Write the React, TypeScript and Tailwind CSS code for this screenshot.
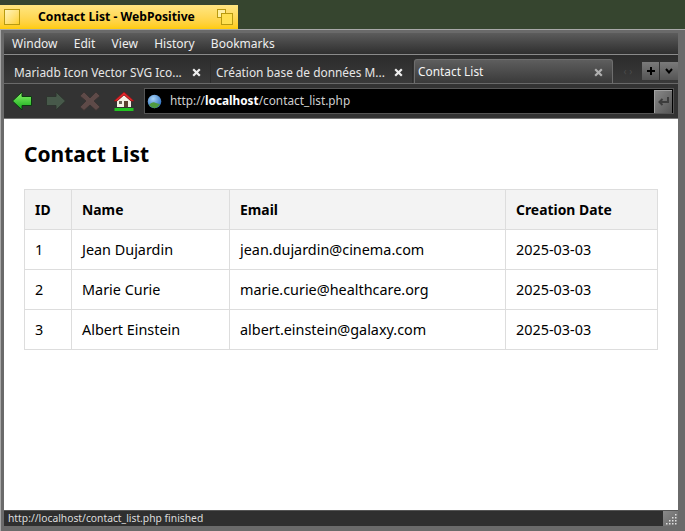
const font = "font-['Noto_Sans',sans-serif]";

const contacts = [
  { id: 1, name: 'Jean Dujardin', email: 'jean.dujardin@cinema.com', date: '2025-03-03' },
  { id: 2, name: 'Marie Curie', email: 'marie.curie@healthcare.org', date: '2025-03-03' },
  { id: 3, name: 'Albert Einstein', email: 'albert.einstein@galaxy.com', date: '2025-03-03' },
];

function BackIcon() {
  return (
    <svg width="22" height="22" viewBox="0 0 22 22">
      <defs>
        <linearGradient id="bk" x1="0" y1="0" x2="0" y2="1">
          <stop offset="0" stopColor="#8cf56a" />
          <stop offset="1" stopColor="#10a818" />
        </linearGradient>
      </defs>
      <path d="M1.5 11 L11 2 V6.5 H20.5 V15.5 H11 V20 Z" fill="url(#bk)" stroke="#0c3a10" strokeWidth="1" />
    </svg>
  );
}

function ForwardIcon() {
  return (
    <svg width="22" height="22" viewBox="0 0 22 22">
      <path d="M20.5 11 L11 2 V6.5 H1.5 V15.5 H11 V20 Z" fill="#47594a" stroke="#2e352f" strokeWidth="1" />
    </svg>
  );
}

function StopIcon() {
  return (
    <svg width="22" height="22" viewBox="0 0 22 22">
      <path d="M5 2 L11 8 L17 2 L21 6 L15 11 L21 17 L17 20.5 L11 15 L5 20.5 L1 17 L7 11 L1 6 Z" fill="#5e4a48" stroke="#3a3332" strokeWidth="1" />
    </svg>
  );
}

function HomeIcon() {
  return (
    <svg width="22" height="22" viewBox="0 0 22 22">
      <path d="M4 11 L11 5 L18 11 V17 H4 Z" fill="#f4f0e4" />
      <path d="M1 11 L11 2 L21 11 L18 11 L11 5 L4 11 Z" fill="#e2272b" stroke="#8c1216" strokeWidth="0.7" />
      <rect x="11" y="11" width="4" height="6" fill="#5b4030" />
      <rect x="6" y="11" width="3" height="3" fill="#6b6256" />
      <rect x="1.5" y="18" width="19" height="3" fill="#22c422" />
    </svg>
  );
}

function GlobeIcon() {
  return (
    <svg width="15" height="15" viewBox="0 0 15 15">
      <defs>
        <radialGradient id="gl" cx="0.4" cy="0.3" r="0.8">
          <stop offset="0" stopColor="#a9d4f7" />
          <stop offset="1" stopColor="#1c62b8" />
        </radialGradient>
      </defs>
      <circle cx="7.5" cy="7.5" r="6.8" fill="url(#gl)" />
      <path d="M2 11 Q5 7 9 9 Q12 10 13 10 Q11 14 7.5 14.2 Q4 14 2 11 Z" fill="#4f9a3e" />
    </svg>
  );
}

function CloseIcon({ color }: { color: string }) {
  return (
    <svg width="9" height="9" viewBox="0 0 9 9" className={color}>
      <path d="M1.2 1.2 L7.8 7.8 M7.8 1.2 L1.2 7.8" stroke="currentColor" strokeWidth="2.2" />
    </svg>
  );
}

function Tab({ title, className, active }: { title: string; className: string; active?: boolean }) {
  return (
    <div
      className={
        active
          ? `${className} h-[24px] flex items-center justify-between pr-[9px] pt-[1px] rounded-t-[3px] border border-b-0 border-[#6e6e6e] bg-gradient-to-b from-[#5e5e5e] to-[#3a3a3a] text-[#f4f4f4]`
          : `${className} h-[24px] flex items-center justify-between pr-[9px] pt-[3px] border-r border-[#2c2c2c] text-[#e6e6e6]`
      }
    >
      <span className="text-[11.9px] leading-none whitespace-nowrap">{title}</span>
      <CloseIcon color={active ? 'text-[#b0b0b0]' : 'text-[#eeeeee]'} />
    </div>
  );
}

export default function App() {
  return (
    <div className={`${font} w-[685px] h-[531px] overflow-hidden bg-[#36452f] flex flex-col`}>
      {/* yellow window tab */}
      <div className="mt-[5px] h-[24px] w-[238px] shrink-0 bg-gradient-to-b from-[#ffe680] to-[#ffcb00] flex items-center justify-between pl-[4px] pr-[5px]">
        <div className="w-[16px] h-[16px] border border-[#b89a10] bg-gradient-to-br from-[#fff3b8] to-[#ffd21c]" />
        <span className="ml-[18px] flex-1 text-[12.15px] font-bold text-black leading-none">Contact List - WebPositive</span>
        <div className="relative w-[16px] h-[16px]">
          <div className="absolute left-0 top-0 w-[9px] h-[9px] border border-[#b89a10] bg-[#fff0a0]" />
          <div className="absolute right-0 bottom-0 w-[12px] h-[12px] border border-[#b89a10] bg-[#ffe050]" />
        </div>
      </div>

      {/* window frame */}
      <div className="flex-1 min-h-0 flex flex-col bg-[#6a6a6a] border-t border-l border-[#a8a8a8] pl-[3px] pr-[7px] pt-[3px] pb-[5px]">
        {/* menu bar */}
        <div className="h-[22px] shrink-0 flex items-center gap-[16.3px] pl-[8px] bg-gradient-to-b from-[#5c5c5c] to-[#2f2f2f] border-b border-[#8a8a8a] text-[12px] text-[#eeeeee]">
          <span>Window</span>
          <span>Edit</span>
          <span>View</span>
          <span>History</span>
          <span>Bookmarks</span>
        </div>

        {/* tab strip */}
        <div className="h-[29px] shrink-0 flex items-end bg-gradient-to-b from-[#2c2c2c] to-[#3a3a3a] border-b border-[#6a6a6a]">
          <Tab title="Mariadb Icon Vector SVG Ico..." className="w-[207px] pl-[10px]" />
          <Tab title="Création base de données M..." className="w-[202px] pl-[5px]" />
          <div className="w-[1px]" />
          <Tab title="Contact List" className="w-[199px] pl-[3px]" active />
          <div className="flex-1 h-[24px] flex items-center justify-end">
            <div className="w-[28px] text-center text-[10px] text-[#4a4a4a] leading-none">‹ ›</div>
            <div className="w-[18px] h-[18px] flex items-center justify-center bg-gradient-to-b from-[#7a7a7a] to-[#555555] border-r border-[#333333]">
              <svg width="10" height="10" viewBox="0 0 10 10"><path d="M5 1 V9 M1 5 H9" stroke="#000000" strokeWidth="2" /></svg>
            </div>
            <div className="w-[18px] h-[18px] flex items-center justify-center bg-gradient-to-b from-[#7a7a7a] to-[#555555]">
              <svg width="8" height="6" viewBox="0 0 8 6"><path d="M1 1 L4 4.5 L7 1" stroke="#000000" strokeWidth="2" fill="none" /></svg>
            </div>
          </div>
        </div>

        {/* toolbar */}
        <div className="h-[35px] shrink-0 flex items-center bg-[#333333] border-b border-[#777777] pl-[7px] pr-[4px]">
          <BackIcon />
          <div className="ml-[12px]"><ForwardIcon /></div>
          <div className="ml-[12px]"><StopIcon /></div>
          <div className="ml-[12px]"><HomeIcon /></div>
          <div className="ml-[9px] flex-1 h-[26px] flex items-center bg-black border border-[#555555]">
            <div className="ml-[2px]"><GlobeIcon /></div>
            <span className="ml-[8px] text-[11.8px] text-[#cfcfcf] whitespace-nowrap">
              http://<b className="text-white">localhost</b>/contact_list.php
            </span>
            <div className="ml-auto mr-[1px] w-[18px] h-[23px] flex items-center justify-center bg-gradient-to-br from-[#888888] to-[#555555] border-l border-t border-[#a0a0a0]">
              <svg width="13" height="11" viewBox="0 0 13 11"><path d="M11 1 V6 H3 M5.5 3 L2.5 6 L5.5 9" stroke="#3c3c3c" strokeWidth="2" fill="none" /></svg>
            </div>
          </div>
        </div>

        {/* page */}
        <div className="flex-1 min-h-0 bg-white pt-[19px] px-[20px] text-black">
          <h1 className="text-[21px] leading-[32px] font-bold">Contact List</h1>
          <table className="mt-[19px] w-[633px] border-collapse table-fixed text-[14.4px]">
            <colgroup>
              <col className="w-[47px]" />
              <col className="w-[158px]" />
              <col className="w-[276px]" />
              <col className="w-[152px]" />
            </colgroup>
            <thead>
              <tr className="h-[40px] bg-[#f3f3f3] text-[13.9px]">
                <th className="border border-[#dddddd] px-[10px] pt-[2px] text-left font-bold">ID</th>
                <th className="border border-[#dddddd] px-[10px] pt-[2px] text-left font-bold">Name</th>
                <th className="border border-[#dddddd] px-[10px] pt-[2px] text-left font-bold">Email</th>
                <th className="border border-[#dddddd] px-[10px] pt-[2px] text-left font-bold">Creation Date</th>
              </tr>
            </thead>
            <tbody>
              {contacts.map((c) => (
                <tr key={c.id} className="h-[40px]">
                  <td className="border border-[#dddddd] px-[10px]">{c.id}</td>
                  <td className="border border-[#dddddd] px-[10px]">{c.name}</td>
                  <td className="border border-[#dddddd] px-[10px]">{c.email}</td>
                  <td className="border border-[#dddddd] px-[10px]">{c.date}</td>
                </tr>
              ))}
            </tbody>
          </table>
        </div>

        {/* status bar */}
        <div className="h-[16px] shrink-0 flex items-center justify-between bg-[#2f2f2f] border-t border-[#555555] pl-[4px] text-[10.3px] text-[#dddddd]">
          <span>http://localhost/contact_list.php finished</span>
          <div className="w-[15px] h-[15px] bg-gradient-to-br from-[#8a8a8a] to-[#666666] flex items-end justify-end p-[1px]">
            <svg width="11" height="11" viewBox="0 0 11 11" fill="#e0e0e0">
              <rect x="9" y="0" width="1.5" height="1.5" />
              <rect x="6" y="3" width="1.5" height="1.5" />
              <rect x="9" y="3" width="1.5" height="1.5" />
              <rect x="3" y="6" width="1.5" height="1.5" />
              <rect x="6" y="6" width="1.5" height="1.5" />
              <rect x="9" y="6" width="1.5" height="1.5" />
              <rect x="0" y="9" width="1.5" height="1.5" />
              <rect x="3" y="9" width="1.5" height="1.5" />
              <rect x="6" y="9" width="1.5" height="1.5" />
              <rect x="9" y="9" width="1.5" height="1.5" />
            </svg>
          </div>
        </div>
      </div>
    </div>
  );
}
